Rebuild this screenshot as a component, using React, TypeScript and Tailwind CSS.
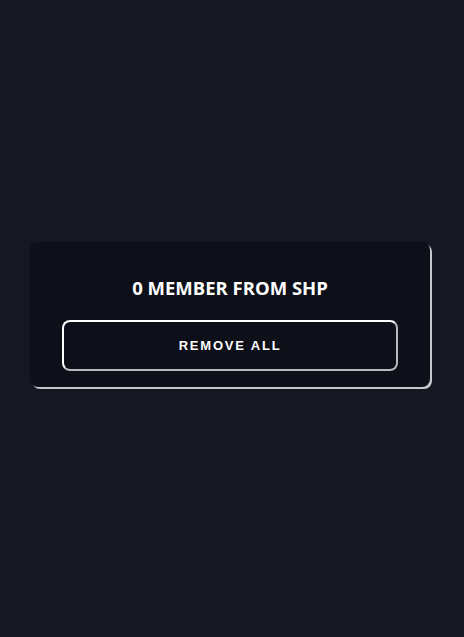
export default function App() {
  return (
    <div className="min-h-screen bg-[#151822] pt-[242px] px-[30px]">
      <div className="w-[400px] rounded-lg bg-[#0d1018] shadow-[2px_2px_0_#c8c8cc] px-8 pt-8 pb-4">
        <h2 className="text-center text-white text-[18.5px] leading-7 font-bold font-['Open_Sans',sans-serif]">
          0 MEMBER FROM SHP
        </h2>
        <button className="mt-[18px] w-full h-[51px] rounded-lg border-2 border-white border-r-[#b8b8bc] border-b-[#b8b8bc] bg-transparent text-white text-[13px] font-bold tracking-[1.8px] font-['Liberation_Sans',Arial,sans-serif]">
          REMOVE ALL
        </button>
      </div>
    </div>
  );
}
